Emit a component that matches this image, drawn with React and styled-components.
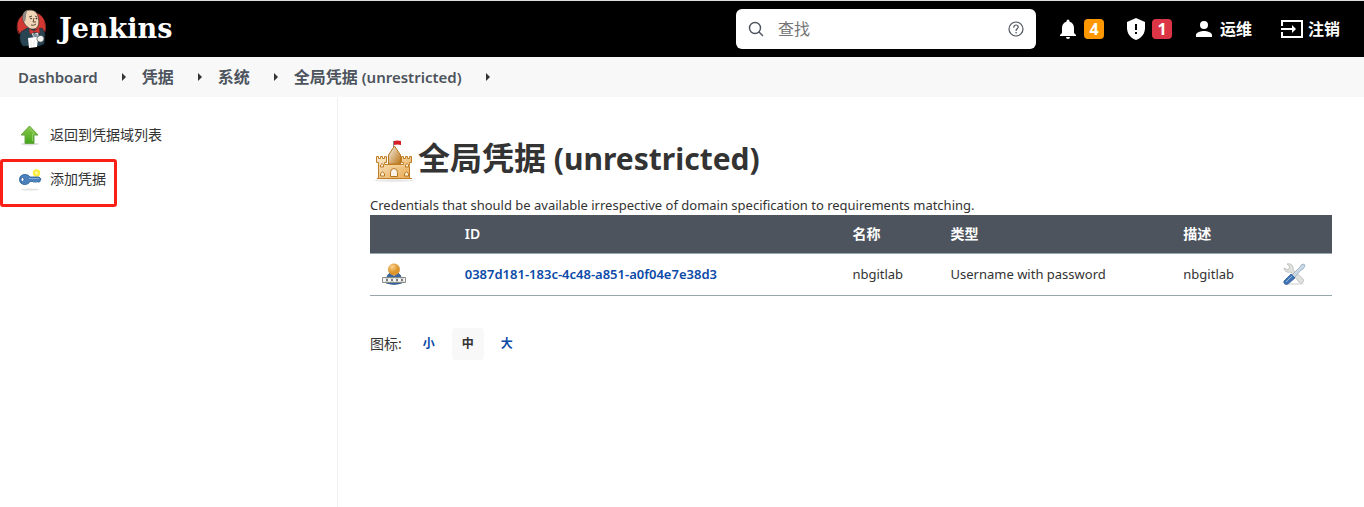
import styled, { createGlobalStyle } from "styled-components";

const GlobalStyle = createGlobalStyle`
  * {
    box-sizing: border-box;
  }

  body {
    margin: 0;
    background: #fff;
    color: #333;
    font-family: "Noto Sans", "Noto Sans CJK SC", sans-serif;
    font-size: 14px;
    line-height: 20px;
  }

  a {
    color: inherit;
    text-decoration: none;
  }
`;

const Page = styled.div`
  display: flex;
  flex-direction: column;
  min-height: 100vh;
`;

const Header = styled.header`
  display: flex;
  align-items: center;
  height: 57px;
  padding: 0 24px 0 16px;
  border-top: 1px solid #dbe0dc;
  background: #000;
  color: #fff;
`;

const Logo = styled.a`
  display: flex;
  align-items: center;
  gap: 12px;
  margin-right: auto;
  font-family: "DejaVu Serif", serif;
  font-size: 27px;
  font-weight: 700;
  line-height: 40px;
`;

const SearchBox = styled.label`
  display: flex;
  align-items: center;
  gap: 12px;
  width: 300px;
  height: 40px;
  padding: 0 12px;
  border-radius: 6px;
  background: #fff;
  color: #4d545d;
`;

const SearchInput = styled.input`
  flex: 1;
  min-width: 0;
  padding: 0;
  border: 0;
  outline: 0;
  background: none;
  font: inherit;
  font-size: 16px;

  &::placeholder {
    color: #757575;
    opacity: 1;
  }
`;

const HelpLink = styled.a`
  display: flex;
`;

const HeaderLinks = styled.nav`
  display: flex;
  align-items: center;
  gap: 20px;
  margin-left: 20px;
`;

const HeaderLink = styled.a`
  display: flex;
  align-items: center;
  gap: 4px;
  margin-left: ${(props) => props.$space || 0}px;
  font-size: 16px;
  font-weight: 700;
`;

const Badge = styled.span`
  width: 20px;
  height: 20px;
  border-radius: 4px;
  background: ${(props) => props.$color};
  font-size: 16px;
  line-height: 20px;
  text-align: center;
`;

const Breadcrumbs = styled.nav`
  display: flex;
  align-items: center;
  height: 40px;
  padding: 0 18px;
  background: #f8f8f8;
  color: #4d545d;
  font-size: 16px;
  font-weight: 600;
`;

const Latin = styled.span`
  font-size: ${(props) => props.$size}px;
`;

const CrumbArrow = styled.span`
  width: 0;
  height: 0;
  margin: 0 16px 0 24px;
  border: 4px solid transparent;
  border-left-color: #333;
  border-right-width: 0;
`;

const Body = styled.div`
  display: flex;
  flex: 1;
`;

const SidePanel = styled.aside`
  flex: 0 0 338px;
  padding-top: 16px;
  border-right: 1px solid #f0f0f0;
`;

const Task = styled.a`
  position: relative;
  display: flex;
  align-items: center;
  gap: 8px;
  height: 44px;
  padding-left: 18px;
`;

const Highlight = styled.span`
  position: absolute;
  inset: 2px auto auto 0;
  width: 117px;
  height: 48px;
  border: 3px solid #fb2016;
  border-radius: 3px;
`;

const Main = styled.main`
  flex: 1;
  min-width: 0;
  padding: 36px 32px;
`;

const Title = styled.h1`
  display: flex;
  align-items: center;
  margin: 0 0 11px;
  font-size: 32px;
  font-weight: 700;
  line-height: 50px;
`;

const Description = styled.div`
  font-size: 13px;
`;

const Table = styled.table`
  width: 100%;
  border-collapse: collapse;
  table-layout: fixed;
  font-size: 13px;
`;

const Col = styled.col`
  width: ${(props) => props.$width}%;
`;

const HeadCell = styled.th`
  height: 38px;
  padding: 0 12px;
  border-bottom: 1px solid #98a6ad;
  background: #4d545d;
  color: #fff;
  font-size: 14px;
  font-weight: 600;
  text-align: left;
`;

const Cell = styled.td`
  height: 42px;
  padding: 0 12px;
  border-bottom: 1px solid #98a6ad;
  white-space: nowrap;

  svg {
    display: block;
  }
`;

const CredentialLink = styled.a`
  color: #0b4aa8;
  font-weight: 600;
`;

const IconSizes = styled.div`
  display: flex;
  align-items: center;
  gap: 7px;
  margin-top: 32px;
`;

const SizesLabel = styled.span`
  margin-right: 4px;
`;

const SizeButton = styled.button`
  width: 32px;
  height: 32px;
  padding: 0;
  border: 0;
  border-radius: 4px;
  background: ${(props) => (props.$active ? "#f8f8f8" : "none")};
  color: ${(props) => (props.$active ? "#333" : "#0b4aa8")};
  font: inherit;
  font-size: 12px;
  font-weight: 700;
`;

const JenkinsIcon = () => (
  <svg width="31" height="42" viewBox="0 0 31 42" aria-hidden="true">
    <ellipse cx="15.5" cy="18" rx="14" ry="14" fill="#d33833" />
    <path d="M3 26c-3-5-2-12 1-16m24 3c2 4 2 9 0 13" fill="none" stroke="#8c2d2a" />
    <path d="M5 24l8-5 7 3 6-2 3 6-1 10-5 2H7c-3-3-4-9-2-14z" fill="#294554" stroke="#142b36" strokeWidth=".7" />
    <path d="M7 12C6 5 9 2 14 2c6 0 8 4 8.500 9 1 4 0 7-2 9-3 2-7 1-9-1-2-2-4-4-4.500-7z" fill="#f0d6b7" stroke="#3b302a" strokeWidth=".7" />
    <path d="M7 12C6 6 8 3 12 2c-2 3-2 5-2 7l-1 5z" fill="#8d8a84" />
    <path d="M13 9l3-1m3 0 2 1m-3 1-1 4 3 0m-5 3q3 1 5-1" fill="none" stroke="#51382d" strokeWidth=".9" />
    <circle cx="15" cy="10.500" r=".8" fill="#222" />
    <circle cx="20.500" cy="10.500" r=".8" fill="#222" />
    <path d="M14 22l4 4 4-2 1 6-5 1z" fill="#c9d6db" />
    <path d="M13 21l5 2 5-3 1 5-5-1-5 2z" fill="#d33833" stroke="#872522" strokeWidth=".4" />
    <path d="M17 26l4 0 1 3-4 1z" fill="#81929b" />
    <path d="M12 30l8-1 2 1-1 9-8 1z" fill="#fff" />
    <path d="M21 30c2-4 7-3 7 1-1 4-5 4-7 1z" fill="#f1f1ef" stroke="#333" strokeWidth=".6" />
    <path d="M15 32v7m3-7v6" stroke="#ddd" strokeWidth=".6" />
  </svg>
);

const SearchIcon = () => (
  <svg width="18" height="18" viewBox="0 0 18 18" fill="none" stroke="currentColor" strokeWidth="1.4" strokeLinecap="round" aria-hidden="true">
    <circle cx="7" cy="8" r="5.5" />
    <path d="m11 12 3.500 3.500" />
  </svg>
);

const HelpIcon = () => (
  <svg width="16" height="16" viewBox="0 0 16 16" fill="none" stroke="currentColor" strokeWidth="1.2" aria-hidden="true">
    <circle cx="8" cy="8" r="7" />
    <path d="M5.8 6.2C5.8 4.9 6.7 4 8 4s2.2.8 2.2 2c0 1.7-2.1 1.7-2.1 3.4" strokeLinecap="round" />
    <circle cx="8.1" cy="11.7" r=".8" fill="currentColor" stroke="none" />
  </svg>
);

const BellIcon = () => (
  <svg width="24" height="24" viewBox="0 0 24 24" fill="currentColor" aria-hidden="true">
    <path d="M12 22a2 2 0 0 0 2-2h-4a2 2 0 0 0 2 2zm6-6v-5c0-3.100-1.600-5.600-4.500-6.300V4a1.500 1.500 0 0 0-3 0v.7C7.600 5.400 6 7.900 6 11v5l-2 2v1h16v-1z" />
  </svg>
);

const ShieldIcon = () => (
  <svg width="24" height="24" viewBox="0 0 24 24" fill="currentColor" aria-hidden="true">
    <path d="m12 1 9 4v6c0 5.600-3.800 10.700-9 12-5.200-1.300-9-6.400-9-12V5z" />
    <path d="M12 7v6m0 2v2" stroke="#000" strokeWidth="2" />
  </svg>
);

const PersonIcon = () => (
  <svg width="24" height="24" viewBox="0 0 24 24" fill="currentColor" aria-hidden="true">
    <path d="M12 12a4 4 0 1 0 0-8 4 4 0 0 0 0 8zm0 2c-2.700 0-8 1.300-8 4v2h16v-2c0-2.700-5.300-4-8-4z" />
  </svg>
);

const LogoutIcon = () => (
  <svg width="24" height="24" viewBox="0 0 24 24" fill="none" stroke="currentColor" strokeWidth="2" aria-hidden="true">
    <path d="M2 9V4h20v16H2v-5M1 12h13" />
    <path d="m12 8 4 4-4 4z" fill="currentColor" stroke="none" />
  </svg>
);

const UpIcon = () => (
  <svg width="24" height="24" viewBox="0 0 24 24" aria-hidden="true">
    <defs>
      <linearGradient id="upFill" x2="0" y2="1">
        <stop stopColor="#8ac947" />
        <stop offset="1" stopColor="#43a51c" />
      </linearGradient>
    </defs>
    <ellipse cx="12" cy="21" rx="9" ry="1.5" fill="#ddd" />
    <path d="m11.500 3 8.500 9h-4v8.500H7V12H3z" fill="url(#upFill)" stroke="#68a544" />
    <path d="m11.500 5 5 6h-2v7" fill="none" stroke="#a2da7a" strokeWidth=".7" />
  </svg>
);

const KeyIcon = () => (
  <svg width="24" height="24" viewBox="0 0 24 24" aria-hidden="true">
    <ellipse cx="12" cy="22.500" rx="9" ry="1" fill="#e3e3e3" />
    <circle cx="18.500" cy="6" r="3.700" fill="#fcee38" />
    <circle cx="18.500" cy="6" r="1.700" fill="#fff7a0" />
    <path d="M1.500 12.500c0-3.500 2.500-5 5.500-5 2.500 0 4 1 5 2.500h9l2 2-1.500 3h-1.500l-1-.500-1 1-1-1-1 1-1-1h-3c-1 2-3 3-5 3-3.500 0-5.500-2-5.500-5z" fill="#4b81bd" stroke="#285d98" strokeWidth=".8" />
    <path d="M11 11.500h10" fill="none" stroke="#86acd6" />
    <ellipse cx="4.500" cy="12.500" rx="1.500" ry="2" fill="#fff" stroke="#285d98" strokeWidth=".8" />
  </svg>
);

const CastleIcon = () => (
  <svg width="48" height="48" viewBox="0 -4 48 48" aria-hidden="true">
    <defs>
      <linearGradient id="castleWall" x2="1" y2="1">
        <stop stopColor="#f8ead0" />
        <stop offset="1" stopColor="#e8a84c" />
      </linearGradient>
      <linearGradient id="castleTower" x2="1" y2="1">
        <stop stopColor="#f6f3ec" />
        <stop offset="1" stopColor="#bb7414" />
      </linearGradient>
    </defs>
    <ellipse cx="24" cy="41.500" rx="20" ry="1.500" fill="#e9e9e9" />
    <path d="M23.500 9V2" stroke="#888" />
    <path d="M24 2q3-1 7 0v4q-4-1-7 0z" fill="#d91e28" />
    <path d="M24.500 7l6 9v9h-12v-9z" fill="url(#castleTower)" stroke="#b87823" />
    <path d="M6.500 17.500h2v2h2v-2h2v2h2v-2h2v6h-2v2h19v-2h-2v-6h2v2h2v-2h2v2h2v-2h2v6h-2v16h-31v-16h-2z" fill="url(#castleWall)" stroke="#c27e24" />
    <path d="M9 27h31" stroke="#f5d399" />
    <path d="M20.500 37.500v-4q0-4 3.500-4t3.500 4v4z" fill="#f8f2e8" stroke="#b97620" />
    <path d="M10.500 28v-2q2-3 3 0v2zm25 0v-2q2-3 3 0v2zM10.500 37v-2q2-4 4 0v2zm24 0v-2q2-4 4 0v2z" fill="#fff2d9" stroke="#b97620" />
    <path d="M7 39.500h35" stroke="#c27e24" />
  </svg>
);

const CredentialIcon = () => (
  <svg width="24" height="24" viewBox="0 0 24 24" aria-hidden="true">
    <defs>
      <radialGradient id="userHead" cx=".35" cy=".25">
        <stop stopColor="#ffd38c" />
        <stop offset="1" stopColor="#dd962d" />
      </radialGradient>
    </defs>
    <path d="M4 21q0-11 8-11t8 11q-8 3-16 0z" fill="#3766a5" stroke="#294f84" strokeWidth=".7" />
    <path d="m9 11 3 3 3-3z" fill="#f4f4f4" />
    <circle cx="12" cy="7.500" r="5.700" fill="url(#userHead)" stroke="#d58e2b" strokeWidth=".5" />
    <path d="M.5 15.500h23v5H.5z" fill="#f5f5f5" stroke="#888e85" />
    <path d="m4 16.500 2 3m0-3-2 3m5-3 2 3m0-3-2 3m5-3 2 3m0-3-2 3m5-3 2 3m0-3-2 3" stroke="#333" strokeWidth=".7" />
  </svg>
);

const ToolsIcon = () => (
  <svg width="24" height="24" viewBox="0 0 24 24" aria-hidden="true">
    <ellipse cx="12" cy="22" rx="10" ry="1" fill="#e5e5e5" />
    <path d="M5 2l3 3-2 3-4-2c0 3 3 5 7 4l8 10c2 3 6 0 4-3l-10-9c1-4-2-7-6-6z" fill="#e0e2e0" stroke="#b5b7b5" strokeWidth=".8" />
    <path d="m10 13 8-8 1-2 3-1 1 2-2 3-2 1-7 8z" fill="#cad9e6" stroke="#8aa1b4" strokeWidth=".7" />
    <path d="M2 19 9 12l4 4-7 6c-2 1-5 0-4-3z" fill="#3f73b3" stroke="#285591" strokeWidth=".7" />
    <path d="m4 20 6-6" stroke="#94b7df" />
  </svg>
);

const crumbs = [
  { latin: "Dashboard" },
  { text: "凭据" },
  { text: "系统" },
  { text: "全局凭据", latin: " (unrestricted)" },
];

const columnWidths = [8.6, 40.3, 10.2, 24.2, 10.3, 6.4];

const credentials = [
  {
    id: "0387d181-183c-4c48-a851-a0f04e7e38d3",
    name: "nbgitlab",
    type: "Username with password",
    description: "nbgitlab",
  },
];

const sizes = ["小", "中", "大"];

export default function App() {
  return (
    <Page>
      <GlobalStyle />
      <Header>
        <Logo href="#">
          <JenkinsIcon />
          Jenkins
        </Logo>
        <SearchBox>
          <SearchIcon />
          <SearchInput type="text" placeholder="查找" aria-label="查找" />
          <HelpLink href="#" aria-label="Help">
            <HelpIcon />
          </HelpLink>
        </SearchBox>
        <HeaderLinks>
          <HeaderLink href="#">
            <BellIcon />
            <Badge $color="#ff9800">4</Badge>
          </HeaderLink>
          <HeaderLink href="#">
            <ShieldIcon />
            <Badge $color="#dc3545">1</Badge>
          </HeaderLink>
          <HeaderLink href="#">
            <PersonIcon />
            运维
          </HeaderLink>
          <HeaderLink href="#" $space={8}>
            <LogoutIcon />
            注销
          </HeaderLink>
        </HeaderLinks>
      </Header>

      <Breadcrumbs aria-label="Breadcrumb">
        {crumbs.map((crumb, index) => [
          <a key={index} href="#">
            {crumb.text}
            {crumb.latin && <Latin $size={15}>{crumb.latin}</Latin>}
          </a>,
          <CrumbArrow key={`arrow-${index}`} />,
        ])}
      </Breadcrumbs>

      <Body>
        <SidePanel>
          <Task href="#">
            <UpIcon />
            返回到凭据域列表
          </Task>
          <Task href="#">
            <KeyIcon />
            添加凭据
            <Highlight />
          </Task>
        </SidePanel>

        <Main>
          <Title>
            <CastleIcon />
            <span>
              全局凭据
              <Latin $size={30}> (unrestricted)</Latin>
            </span>
          </Title>
          <Description>
            Credentials that should be available irrespective of domain specification to requirements matching.
          </Description>
          <Table>
            <colgroup>
              {columnWidths.map((width, index) => (
                <Col key={index} $width={width} />
              ))}
            </colgroup>
            <thead>
              <tr>
                <HeadCell />
                <HeadCell>ID</HeadCell>
                <HeadCell>名称</HeadCell>
                <HeadCell>类型</HeadCell>
                <HeadCell>描述</HeadCell>
                <HeadCell />
              </tr>
            </thead>
            <tbody>
              {credentials.map((item) => (
                <tr key={item.id}>
                  <Cell><CredentialIcon /></Cell>
                  <Cell><CredentialLink href="#">{item.id}</CredentialLink></Cell>
                  <Cell>{item.name}</Cell>
                  <Cell>{item.type}</Cell>
                  <Cell>{item.description}</Cell>
                  <Cell><a href="#" aria-label="Update"><ToolsIcon /></a></Cell>
                </tr>
              ))}
            </tbody>
          </Table>
          <IconSizes>
            <SizesLabel>图标:</SizesLabel>
            {sizes.map((size) => (
              <SizeButton key={size} $active={size === "中"}>{size}</SizeButton>
            ))}
          </IconSizes>
        </Main>
      </Body>
    </Page>
  );
}
